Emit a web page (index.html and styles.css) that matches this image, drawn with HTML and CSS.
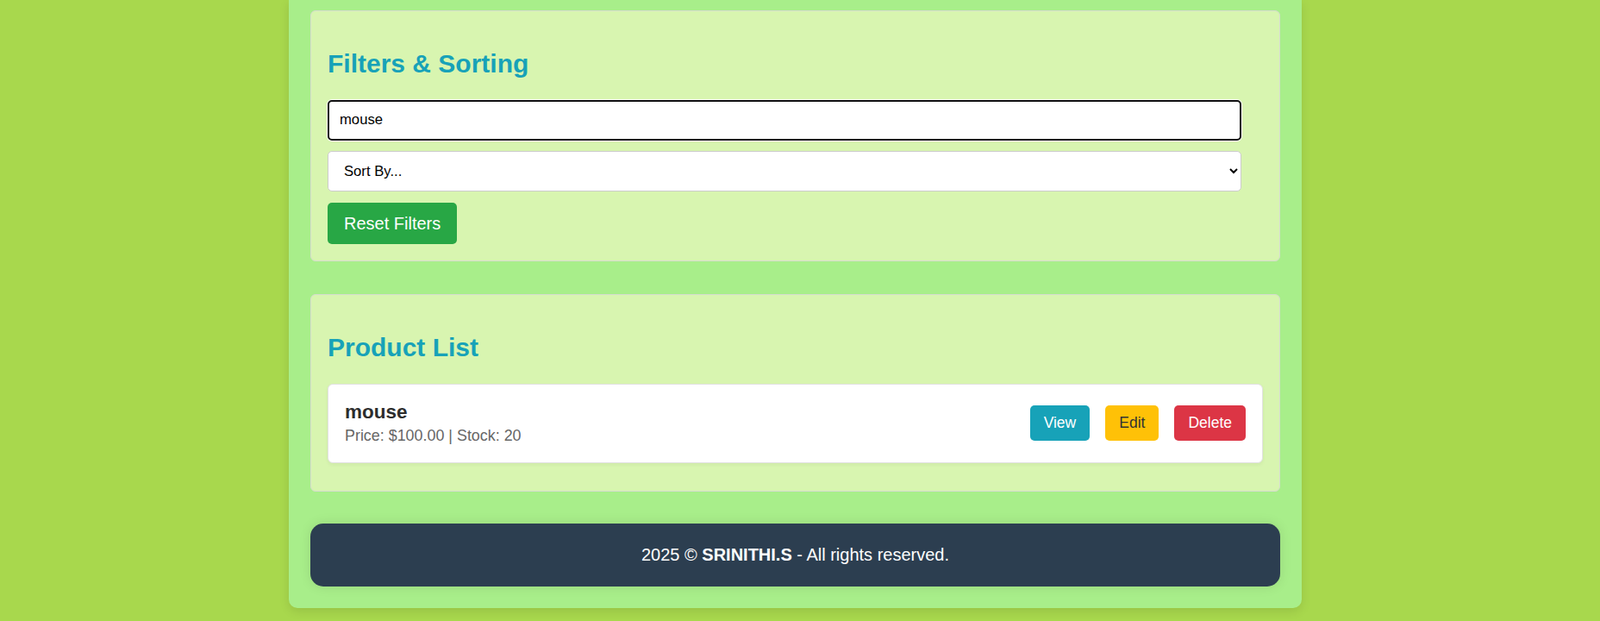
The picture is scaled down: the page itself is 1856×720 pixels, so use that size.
FILE: index.html
```html
<!DOCTYPE html>
<html lang="en">
<head>
<meta charset="utf-8">
<title>Product Manager</title>
<link rel="stylesheet" href="styles.css">
</head>
<body>
<div class="page">
  <main class="container">
    <section class="card">
      <h2 class="card-title">Filters &amp; Sorting</h2>
      <input class="field search" type="text" value="mouse">
      <select class="field sort">
        <option>Sort By...</option>
        <option>Price: Low to High</option>
        <option>Price: High to Low</option>
        <option>Stock</option>
      </select>
      <button class="btn btn-reset">Reset Filters</button>
    </section>

    <section class="card">
      <h2 class="card-title">Product List</h2>
      <ul class="product-list">
        <li class="product">
          <div class="product-info">
            <h3 class="product-name">mouse</h3>
            <p class="product-meta">Price: $100.00 | Stock: 20</p>
          </div>
          <div class="product-actions">
            <button class="btn-sm btn-view">View</button>
            <button class="btn-sm btn-edit">Edit</button>
            <button class="btn-sm btn-delete">Delete</button>
          </div>
        </li>
      </ul>
    </section>

    <footer class="footer">
      <p>2025 &copy; <strong>SRINITHI.S</strong> - All rights reserved.</p>
    </footer>
  </main>
</div>
</body>
</html>
```

FILE: styles.css
```css
* {
  box-sizing: border-box;
}

html, body {
  margin: 0;
  padding: 0;
}

body {
  background: #a8d84d;
  font-family: "Liberation Sans", Arial, Helvetica, sans-serif;
  color: #333;
}

.page {
  display: flex;
  justify-content: center;
  padding-right: 11px;
  padding-bottom: 13px;
}

.container {
  width: 1175px;
  background: #a8ee8a;
  padding: 12px 25px 25px;
  border-radius: 0 0 10px 10px;
  box-shadow: 0 4px 12px rgba(0, 0, 0, 0.1);
}

.card {
  background: #d8f5b0;
  border: 1px solid #d6dccf;
  border-radius: 6px;
  padding: 19px;
  margin-bottom: 37.5px;
}

.card-title {
  font-size: 30px;
  font-weight: bold;
  color: #17a2b8;
  margin: 24.9px 0;
  line-height: normal;
}

.field {
  display: block;
  width: 1060px;
  height: 47px;
  font-family: "Liberation Sans", Arial, Helvetica, sans-serif;
  font-size: 16.67px;
  color: #000;
  background: #fff;
  border-radius: 5px;
}

.search {
  border: 2px solid #101010;
  box-shadow: 0 0 0 1px rgba(255, 255, 255, 0.9);
  padding: 0 12px;
  margin-bottom: 12px;
  outline: none;
}

.sort {
  border: 1px solid #ccc;
  padding: 0 12px 0 14px;
  margin-bottom: 13.5px;
}

.btn {
  display: block;
  height: 48px;
  padding: 0 19px;
  border: none;
  border-radius: 5px;
  font-family: "Liberation Sans", Arial, Helvetica, sans-serif;
  font-size: 20px;
  cursor: pointer;
}

.btn-reset {
  background: #28a745;
  color: #fff;
}

.product-list {
  list-style: none;
  margin: 0;
  padding: 0;
}

.product {
  display: flex;
  justify-content: space-between;
  align-items: center;
  background: #fff;
  border: 1px solid #e2e2e2;
  border-radius: 6px;
  padding: 19.5px 19px;
  margin-bottom: 12.5px;
  box-shadow: 0 2px 4px rgba(0, 0, 0, 0.05);
}

.product-name {
  margin: 0 0 4px;
  font-size: 22.5px;
  font-weight: bold;
  color: #2d2d2d;
  line-height: normal;
}

.product-meta {
  margin: 0;
  font-size: 17.9px;
  color: #666;
  line-height: 21.6px;
}

.product-actions {
  display: flex;
  gap: 18px;
}

.btn-sm {
  height: 41px;
  padding: 0 16px;
  border: none;
  border-radius: 5px;
  font-family: "Liberation Sans", Arial, Helvetica, sans-serif;
  font-size: 17.5px;
  cursor: pointer;
}

.btn-view {
  background: #17a2b8;
  color: #fff;
}

.btn-edit {
  background: #ffc107;
  color: #333;
}

.btn-delete {
  background: #dc3545;
  color: #fff;
}

.footer {
  background: #2c3e50;
  color: #fff;
  border-radius: 15px;
  padding: 25px;
  text-align: center;
  box-shadow: 0 0 14px rgba(0, 0, 0, 0.1);
}

.footer p {
  margin: 0;
  font-size: 20px;
  line-height: 23px;
}
```
